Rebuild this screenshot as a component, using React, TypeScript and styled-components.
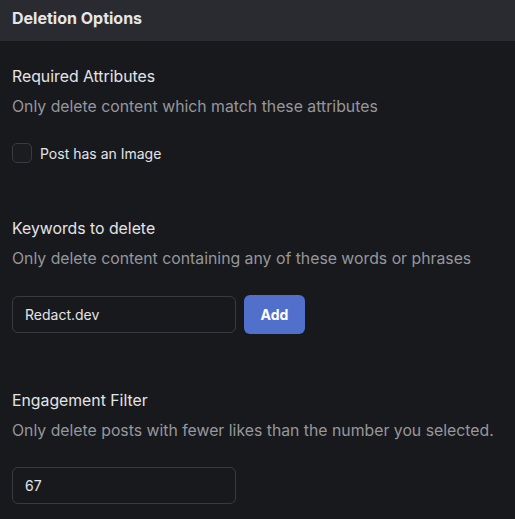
import styled, { createGlobalStyle } from "styled-components";

const GlobalStyle = createGlobalStyle`
  html, body {
    margin: 0;
    padding: 0;
    background-color: #18191d;
    font-family: Inter, "Noto Sans", sans-serif;
  }
  * {
    box-sizing: border-box;
  }
`;

const Panel = styled.div`
  display: flex;
  flex-direction: column;
  width: 515px;
  min-height: 519px;
  background-color: #18191d;
  overflow: hidden;
`;

const Header = styled.div`
  display: flex;
  align-items: center;
  height: 41px;
  padding: 0 12px 6px;
  background-color: #2a2b30;
`;

const HeaderTitle = styled.h2`
  margin: 0;
  font-size: 16px;
  font-weight: 700;
  color: #e6e6e8;
`;

const Content = styled.div`
  display: flex;
  flex-direction: column;
  padding: 24px 12px 0;
`;

const Section = styled.div<{ $gap: number }>`
  display: flex;
  flex-direction: column;
  margin-bottom: ${(p) => p.$gap}px;
`;

const SectionTitle = styled.h3`
  margin: 0;
  font-size: 15.8px;
  line-height: 24px;
  font-weight: 400;
  color: #e4e4e6;
`;

const SectionText = styled.p`
  margin: 6px 0 0;
  font-size: 15.8px;
  line-height: 24px;
  color: #96979b;
`;

const Controls = styled.div`
  display: flex;
  align-items: center;
  gap: 8px;
  margin-top: 24px;
`;

const CheckboxLabel = styled.label`
  display: flex;
  align-items: center;
  gap: 8px;
  font-size: 14px;
  color: #e4e4e6;
  cursor: pointer;
`;

const Checkbox = styled.span`
  width: 20px;
  height: 20px;
  border: 1px solid #3a3b40;
  border-radius: 5px;
  background-color: #1b1c20;
`;

const TextInput = styled.input`
  width: 224px;
  height: 37px;
  padding: 0 12px;
  border: 1px solid #3a3b40;
  border-radius: 6px;
  background-color: #18191d;
  color: #e4e4e6;
  font-family: inherit;
  font-size: 14px;
  outline: none;
`;

const Button = styled.button`
  width: 61px;
  height: 39px;
  border: none;
  border-radius: 6px;
  background-color: #5070cc;
  color: #ffffff;
  font-family: inherit;
  font-size: 14px;
  font-weight: 700;
  cursor: pointer;
`;

export default function App() {
  return (
    <Panel>
      <GlobalStyle />
      <Header>
        <HeaderTitle>Deletion Options</HeaderTitle>
      </Header>
      <Content>
        <Section $gap={54}>
          <SectionTitle>Required Attributes</SectionTitle>
          <SectionText>Only delete content which match these attributes</SectionText>
          <Controls>
            <CheckboxLabel>
              <Checkbox />
              Post has an Image
            </CheckboxLabel>
          </Controls>
        </Section>
        <Section $gap={55}>
          <SectionTitle>Keywords to delete</SectionTitle>
          <SectionText>
            Only delete content containing any of these words or phrases
          </SectionText>
          <Controls>
            <TextInput defaultValue="Redact.dev" />
            <Button>Add</Button>
          </Controls>
        </Section>
        <Section $gap={0}>
          <SectionTitle>Engagement Filter</SectionTitle>
          <SectionText>
            Only delete posts with fewer likes than the number you selected.
          </SectionText>
          <Controls>
            <TextInput defaultValue="67" />
          </Controls>
        </Section>
      </Content>
    </Panel>
  );
}
